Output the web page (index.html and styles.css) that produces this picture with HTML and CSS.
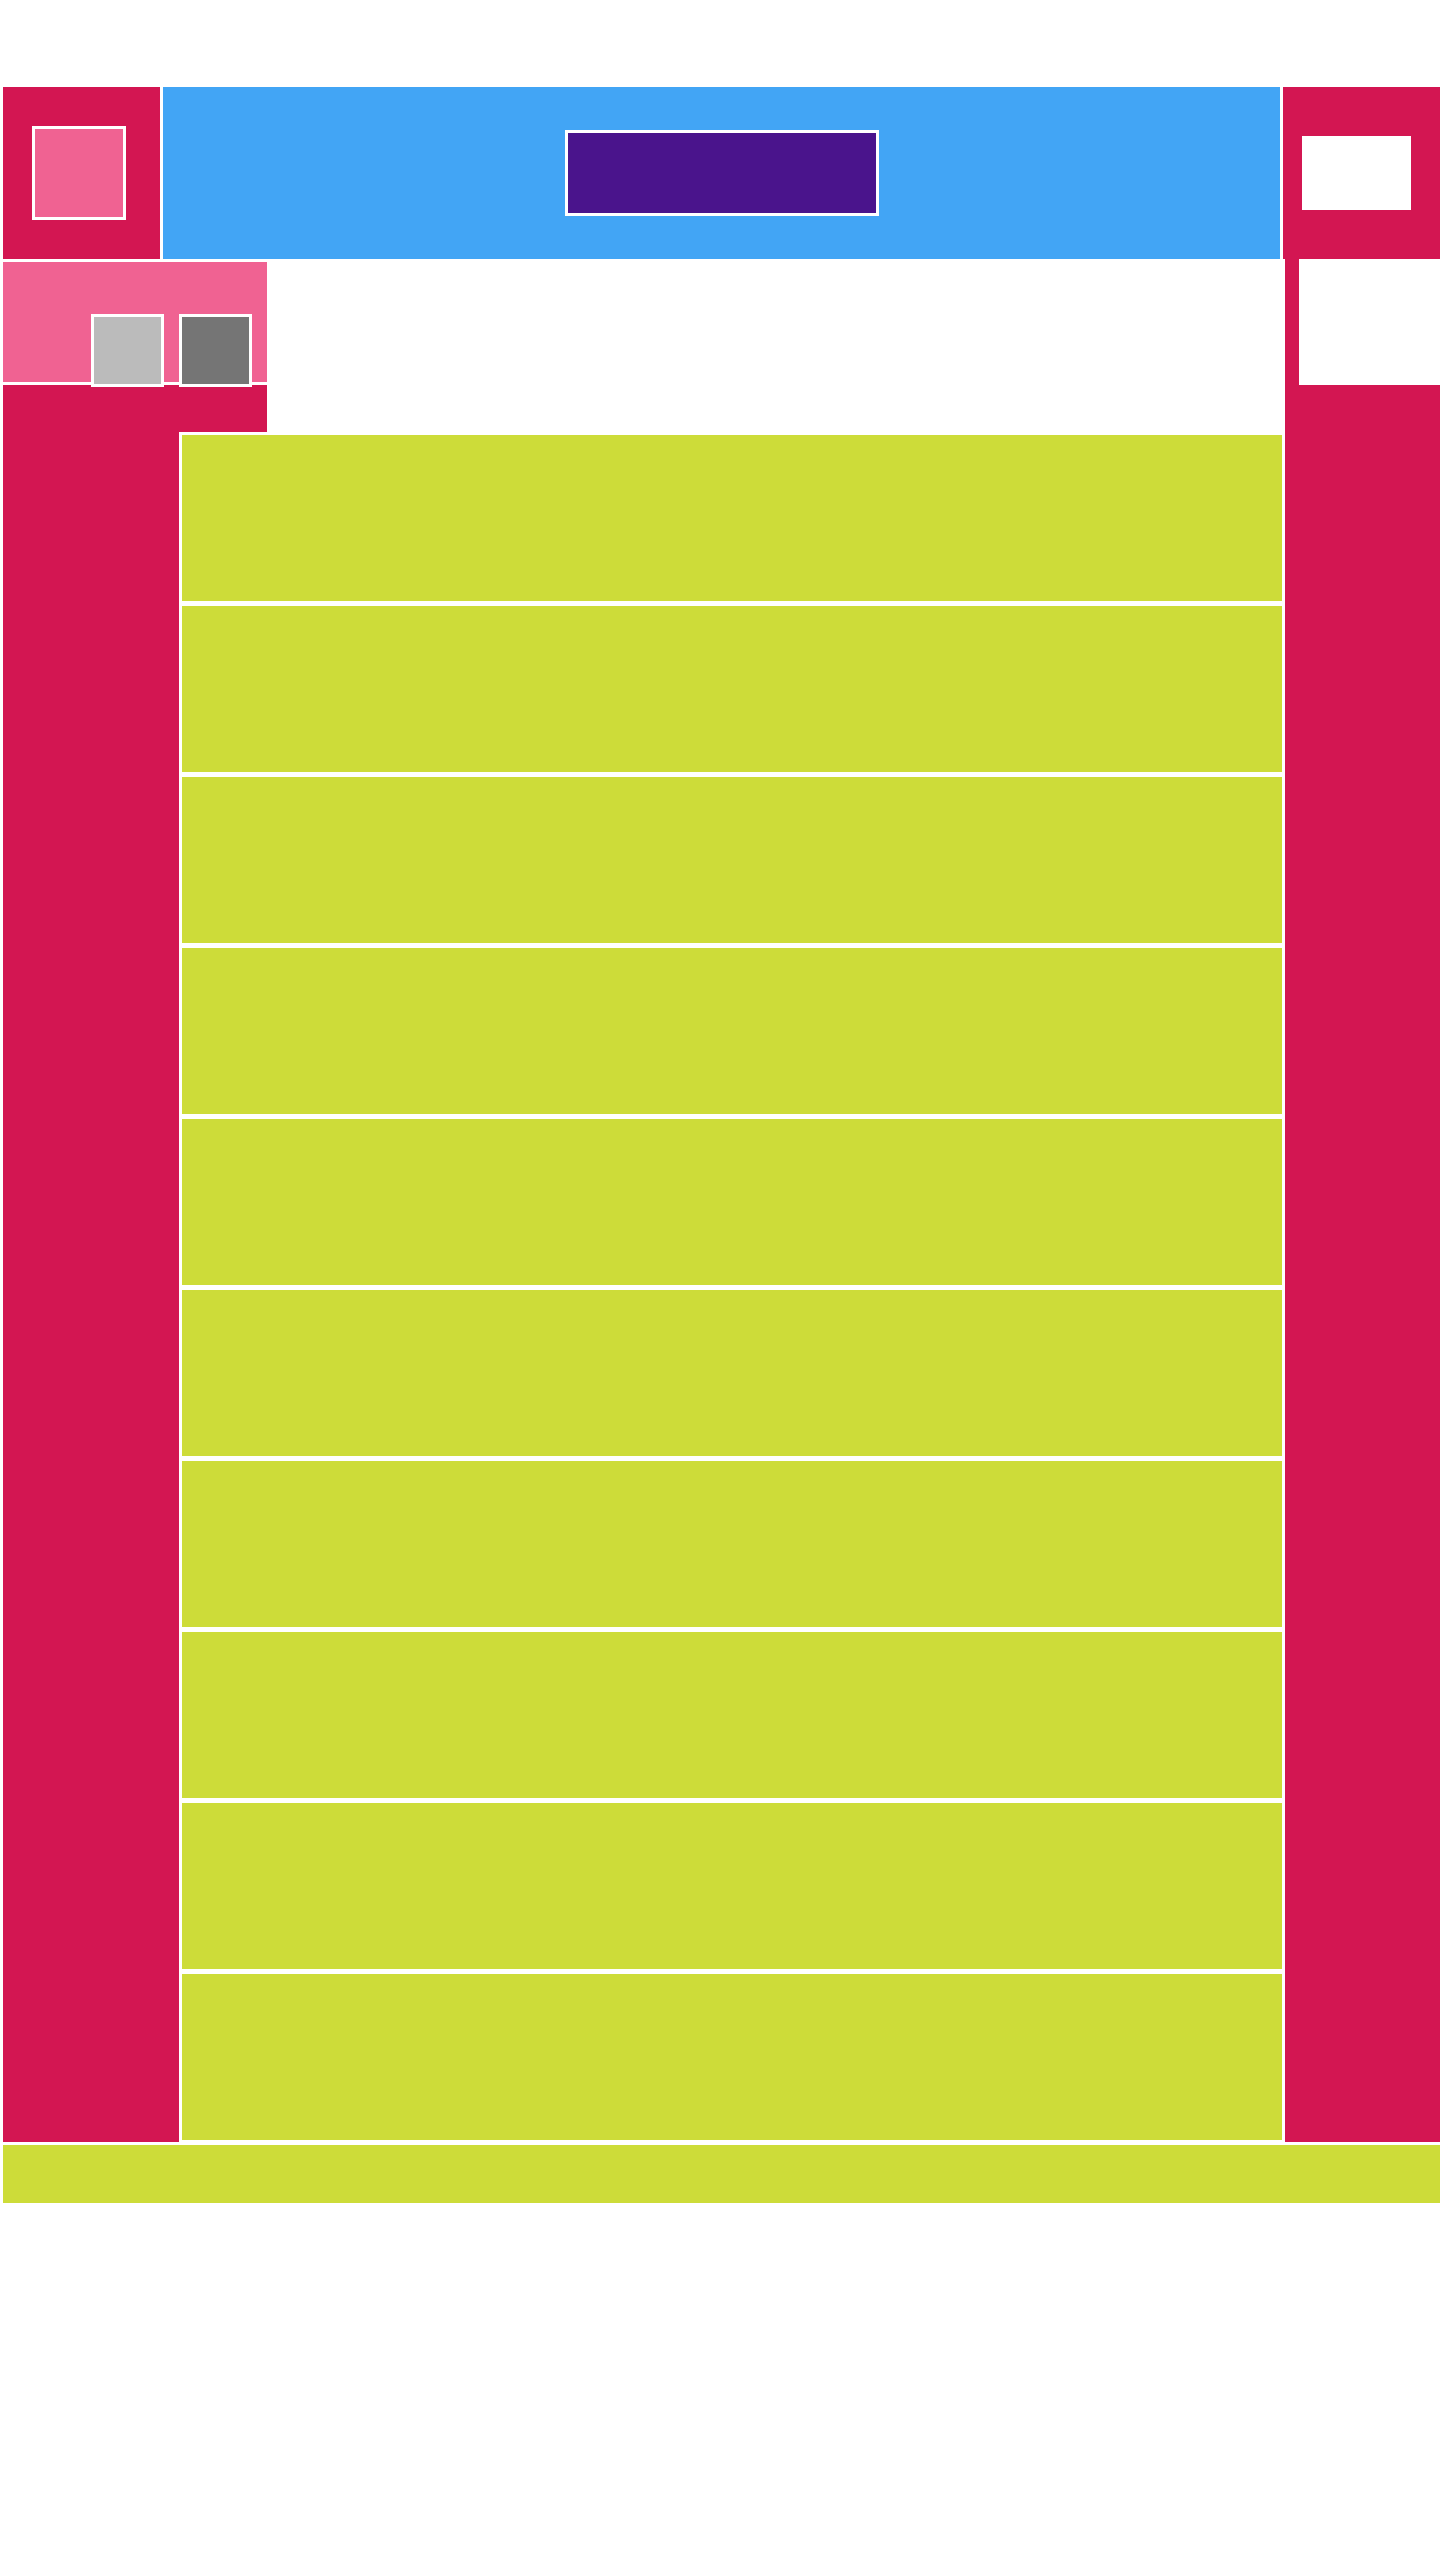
FILE: index.html
```html
<!DOCTYPE html>
<html lang="en">
<head>
<meta charset="utf-8">
<title>Layout</title>
<link rel="stylesheet" href="styles.css">
</head>
<body>
<div class="page">
  <header class="top">
    <div class="top-left"><div class="logo-box"></div></div>
    <div class="top-center"><div class="title-box"></div></div>
    <div class="top-right"><div class="action-box"></div></div>
  </header>
  <div class="body-grid">
    <div class="side-top">
      <div class="side-panel">
        <div class="chip chip-light"></div>
        <div class="chip chip-dark"></div>
      </div>
      <div class="side-fill"></div>
    </div>
    <div class="side-bottom"></div>
    <main class="list">
      <div class="row"></div>
      <div class="row"></div>
      <div class="row"></div>
      <div class="row"></div>
      <div class="row"></div>
      <div class="row"></div>
      <div class="row"></div>
      <div class="row"></div>
      <div class="row"></div>
      <div class="row"></div>
    </main>
    <aside class="right-col"><div class="right-card"></div></aside>
  </div>
  <footer class="bottom-bar"></footer>
</div>
</body>
</html>
```
FILE: styles.css
```css
* { box-sizing: border-box; }
body { margin: 0; background: #ffffff; font-family: "Liberation Sans", Arial, sans-serif; }
.page { padding: 87px 0 0 3px; }

.top {
  display: grid;
  grid-template-columns: 157px 1117px 157px;
  column-gap: 3px;
  height: 172px;
}
.top-left { background: #d31652; padding: 39px 0 0 29px; }
.logo-box { width: 94px; height: 94px; border: 3px solid #fff; background: #f06292; }
.top-center { background: #42a5f5; display: flex; align-items: center; justify-content: center; }
.title-box { width: 314px; height: 86px; border: 3px solid #fff; background: #4a148c; }
.top-right { background: #d31652; display: flex; align-items: center; padding-left: 19px; }
.action-box { width: 109px; height: 74px; background: #fff; }

.body-grid {
  display: grid;
  grid-template-columns: 176px 88px 1018px 155px;
  grid-template-rows: 173px 1710px;
}
.side-top {
  grid-column: 1 / 3;
  grid-row: 1;
  padding-top: 3px;
  display: flex;
  flex-direction: column;
  gap: 3px;
}
.side-panel {
  height: 120px;
  flex: none;
  background: #f06292;
  display: flex;
  align-items: flex-start;
  gap: 15px;
  padding: 52px 0 0 88px;
}
.chip { width: 73px; height: 73px; flex: none; border: 3px solid #fff; position: relative; z-index: 1; }
.chip-light { background: #bbbbbb; }
.chip-dark { background: #757575; }
.side-fill { flex: 1; background: #d31652; }
.side-bottom { grid-column: 1; grid-row: 2; background: #d31652; }

.list {
  grid-column: 2 / 4;
  grid-row: 2;
  padding: 3px 3px 0;
  display: flex;
  flex-direction: column;
  gap: 5px;
}
.row { height: 166px; flex: none; background: #cddc39; }

.right-col { grid-column: 4; grid-row: 1 / 3; background: #d31652; padding-left: 14px; }
.right-card { height: 126px; background: #fff; }

.bottom-bar { margin-top: 3px; height: 58px; background: #cddc39; }
```
